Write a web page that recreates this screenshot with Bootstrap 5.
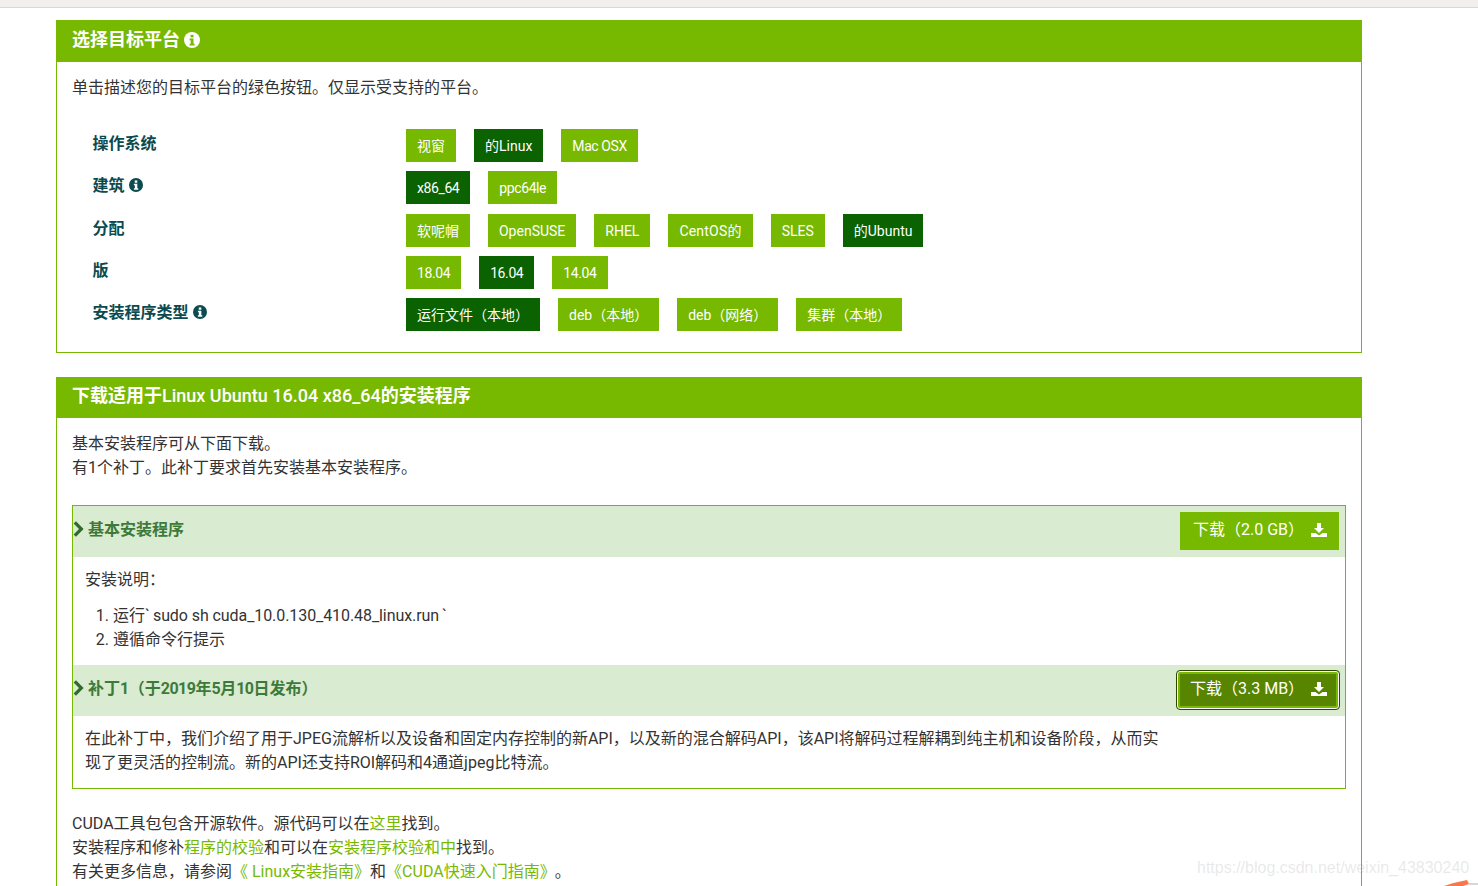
<!DOCTYPE html>
<html lang="zh-CN">
<head>
    <meta charset="UTF-8">
    <meta name="viewport" content="width=device-width, initial-scale=1.0">
    <title>CUDA Toolkit Downloads</title>
    <link href="https://cdn.jsdelivr.net/npm/bootstrap@5.3.0/dist/css/bootstrap.min.css" rel="stylesheet">
    <style>
        html, body { height: 886px; overflow: hidden; }
        body {
            font-family: Roboto, "Noto Sans CJK SC", sans-serif;
            font-size: 16px;
            line-height: 24px;
            color: #333;
            background: #fff;
        }
        a { color: #76b900; text-decoration: none; }
        .top-strip { height: 8px; background: #f1f0ef; border-bottom: 1px solid #d8d8d8; }
        .page-wrap { width: 1306px; margin: 12px 0 0 56px; }
        .dl-panel { border: 1px solid #76b900; border-radius: 0; margin-bottom: 24px; }
        .dl-head {
            background: #76b900; color: #fff; font-size: 18px; font-weight: 700;
            height: 42px; margin: -1px -1px 0; padding: 0 16px 2px;
        }
        .dl-head.short { height: 41px; padding-bottom: 3px; }
        .dl-head .plain { font-weight: 500; }
        .dl-body-a { padding: 14px 15px 0; height: 290px; }
        .dl-body-b { padding: 14px 15px 0; height: 500px; }
        .intro { margin-bottom: 25px; }
        .opt-row { height: 42.3px; padding-left: 20.6px; }
        .opt-label {
            width: 313.4px; flex: none; color: #0b4b4f; font-weight: 700; line-height: 24px;
            padding-top: 7px;
        }
        .opt-btns { gap: 18px; padding-top: 4px; }
        .opt-btn {
            height: 33px; line-height: 35px; padding: 0 11px; font-size: 14px;
            background: #76b900; color: #fff; white-space: nowrap;
        }
        .opt-btn.on { background: #0a6200; }
        .opt-btn.tight { letter-spacing: -.4px; }
        .opt-btn.wide { letter-spacing: .2px; }
        .info-ic { width: 14px; height: 14px; vertical-align: -1px; }
        .head-ic { width: 16px; height: 16px; vertical-align: -1px; }
        .acc-box { border: 1px solid #76b900; margin-top: 25px; margin-bottom: 23px; }
        .acc-head { background: #d9ebd0; height: 51px; padding: 0 6px 0 0; color: #3d7a3a; font-weight: 700; }
        .acc-title { padding-top: 12px; }
        .acc-title svg { width: 11px; height: 16px; margin-right: 4px; vertical-align: -2px; }
        .tight-num { letter-spacing: -.5px; }
        .get-btn {
            width: 159px; height: 38px; margin-top: 6px; padding: 0 12px 2px 13px; border-radius: 0; border: 0;
            background: #76b900; color: #fff; font-size: 16px; line-height: 34px;
        }
        .get-btn svg { width: 16px; height: 16px; }
        .get-btn.focused {
            width: 162px; background: #578500; border-radius: 3px;
            box-shadow: 0 0 0 1px #fff inset, 0 0 0 3px #76b900 inset;
            outline: 1px solid #2f4500; outline-offset: 0;
        }
        .acc-text { padding: 11px 12px 0; }
        .acc-text ol { margin: 12px 0 0; padding-left: 28px; }
        .acc-first { height: 108px; }
        .acc-second { height: 72px; width: 1100px; }
        .cmd-text { margin: 0 3px; letter-spacing: -.08px; }
        .dot-gap { margin-left: 7px; }
        .csdn-mark {
            position: absolute; left: 1197px; top: 857px; font-family: "Liberation Sans", sans-serif;
            font-size: 16px; line-height: 22px; color: rgba(150, 150, 150, .22); white-space: nowrap;
        }
        .corner-mark { position: absolute; left: 1444px; top: 879px; width: 34px; height: 7px; }
    </style>
</head>
<body>
    <div class="top-strip"></div>
    <div class="page-wrap">
        <div class="dl-panel">
            <div class="dl-head d-flex align-items-center gap-1">
                <span>选择目标平台</span>
                <svg class="head-ic" viewBox="0 0 16 16"><circle cx="8" cy="8" r="8" fill="#fff"/><rect x="6.6" y="2.8" width="2.9" height="2.6" fill="#76b900"/><path d="M5.6 6.6h3.9v5.2h1.1v1.6H5.6v-1.6h1.1V8.2H5.6z" fill="#76b900"/></svg>
            </div>
            <div class="dl-body-a">
                <div class="intro">单击描述您的目标平台的绿色按钮。仅显示受支持的平台。</div>
                <div class="opt-row d-flex">
                    <div class="opt-label">操作系统</div>
                    <div class="opt-btns d-flex">
                        <span class="opt-btn">视窗</span><span class="opt-btn on">的Linux</span><span class="opt-btn tight">Mac OSX</span>
                    </div>
                </div>
                <div class="opt-row d-flex">
                    <div class="opt-label">建筑
                        <svg class="info-ic" viewBox="0 0 16 16"><circle cx="8" cy="8" r="8" fill="#0b4b4f"/><rect x="6.6" y="2.8" width="2.9" height="2.6" fill="#fff"/><path d="M5.6 6.6h3.9v5.2h1.1v1.6H5.6v-1.6h1.1V8.2H5.6z" fill="#fff"/></svg>
                    </div>
                    <div class="opt-btns d-flex">
                        <span class="opt-btn on tight">x86_64</span><span class="opt-btn tight">ppc64le</span>
                    </div>
                </div>
                <div class="opt-row d-flex">
                    <div class="opt-label">分配</div>
                    <div class="opt-btns d-flex">
                        <span class="opt-btn">软呢帽</span><span class="opt-btn">OpenSUSE</span><span class="opt-btn">RHEL</span><span class="opt-btn wide">CentOS的</span><span class="opt-btn">SLES</span><span class="opt-btn on">的Ubuntu</span>
                    </div>
                </div>
                <div class="opt-row d-flex">
                    <div class="opt-label">版</div>
                    <div class="opt-btns d-flex">
                        <span class="opt-btn tight">18.04</span><span class="opt-btn on tight">16.04</span><span class="opt-btn tight">14.04</span>
                    </div>
                </div>
                <div class="opt-row d-flex">
                    <div class="opt-label">安装程序类型
                        <svg class="info-ic" viewBox="0 0 16 16"><circle cx="8" cy="8" r="8" fill="#0b4b4f"/><rect x="6.6" y="2.8" width="2.9" height="2.6" fill="#fff"/><path d="M5.6 6.6h3.9v5.2h1.1v1.6H5.6v-1.6h1.1V8.2H5.6z" fill="#fff"/></svg>
                    </div>
                    <div class="opt-btns d-flex">
                        <span class="opt-btn on">运行文件（本地）</span><span class="opt-btn">deb（本地）</span><span class="opt-btn">deb（网络）</span><span class="opt-btn">集群（本地）</span>
                    </div>
                </div>
            </div>
        </div>

        <div class="dl-panel">
            <div class="dl-head short d-flex align-items-center">
                <span>下载适用于<span class="plain">Linux Ubuntu 16.04 x86_64</span>的安装程序</span>
            </div>
            <div class="dl-body-b">
                <div>基本安装程序可从下面下载。<br>有1个补丁。此补丁要求首先安装基本安装程序。</div>
                <div class="acc-box">
                    <div class="acc-head d-flex justify-content-between">
                        <div class="acc-title">
                            <svg viewBox="0 0 11 16"><path d="M.6 2.6 3 .2 10.6 8 3 15.8.6 13.400 6 8z" fill="#2f6b2c"/></svg>基本安装程序
                        </div>
                        <button type="button" class="btn get-btn d-flex justify-content-between align-items-center">
                            <span>下载（2.0 GB）</span>
                            <svg viewBox="0 0 16 16"><path d="M6 1h4v5h3l-5 5-5-5h3z" fill="#fff"/><path d="M0 11h4.5L8 13.5 11.500 11H16v4H0z" fill="#fff"/></svg>
                        </button>
                    </div>
                    <div class="acc-text acc-first">
                        <div>安装说明：</div>
                        <ol>
                            <li>运行`<span class="cmd-text">sudo sh cuda_10.0.130_410.48_linux.run</span>`</li>
                            <li>遵循命令行提示</li>
                        </ol>
                    </div>
                    <div class="acc-head d-flex justify-content-between">
                        <div class="acc-title">
                            <svg viewBox="0 0 11 16"><path d="M.6 2.6 3 .2 10.6 8 3 15.8.6 13.400 6 8z" fill="#2f6b2c"/></svg>补丁<span class="tight-num">1</span>（于<span class="tight-num">2019</span>年<span class="tight-num">5</span>月<span class="tight-num">10</span>日发布）
                        </div>
                        <button type="button" class="btn get-btn focused d-flex justify-content-between align-items-center">
                            <span>下载（3.3 MB）</span>
                            <svg viewBox="0 0 16 16"><path d="M6 1h4v5h3l-5 5-5-5h3z" fill="#fff"/><path d="M0 11h4.5L8 13.5 11.500 11H16v4H0z" fill="#fff"/></svg>
                        </button>
                    </div>
                    <div class="acc-text acc-second">在此补丁中，我们介绍了用于JPEG流解析以及设备和固定内存控制的新API，以及新的混合解码API，该API将解码过程解耦到纯主机和设备阶段，从而实现了更灵活的控制流。新的API还支持ROI解码和4通道jpeg比特流。</div>
                </div>
                <div>CUDA工具包包含开源软件。源代码可以在<a href="#">这里</a>找到。<br>
                安装程序和修补<a href="#">程序的校验</a>和可以在<a href="#">安装程序校验和中</a>找到。<br>
                有关更多信息，请参阅<a href="#">《 Linux安装指南》</a>和<a href="#">《CUDA快速入门指南》</a><span class="dot-gap">。</span></div>
            </div>
        </div>
    </div>

    <div class="csdn-mark">https://blog.csdn.net/weixin_43830240</div>
    <svg class="corner-mark" viewBox="0 0 34 7"><path d="M0 7 Q12 3 23 1 L25 5 L19 7z" fill="#f9774a"/><path d="M25 5h9" stroke="#b0b0b0" stroke-width="1"/></svg>
</body>
</html>
